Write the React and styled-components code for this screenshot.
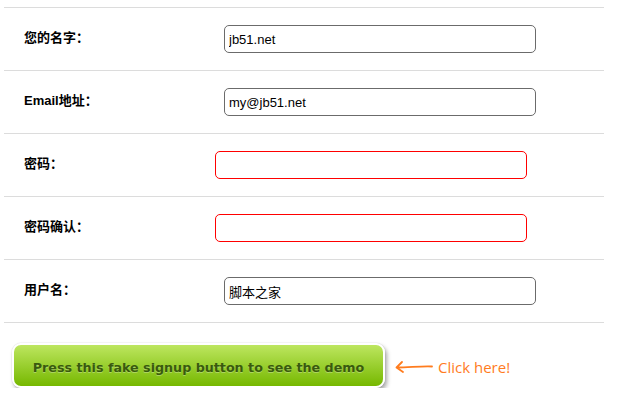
import React from 'react';
import styled, { createGlobalStyle } from 'styled-components';

const GlobalStyle = createGlobalStyle`
    body {
        margin: 0;
        background: #fff;
        font-family: "Liberation Sans", Arial, "Noto Sans CJK SC", sans-serif;
        color: #000;
    }
`;

const Page = styled.div`
    padding: 7px 0 0 4px;
    width: 600px;
`;

const FormList = styled.ul`
    list-style: none;
    margin: 0;
    padding: 0;
    border-top: 1px solid #dcdcdc;
`;

const Row = styled.li`
    display: flex;
    align-items: center;
    height: 62px;
    border-bottom: 1px solid #dcdcdc;
`;

const Label = styled.label`
    width: 220px;
    padding-left: 20px;
    padding-bottom: 5px;
    box-sizing: border-box;
    font-size: 13px;
    font-weight: bold;
    font-family: "Liberation Sans", Arial, "Noto Sans CJK SC", sans-serif;
`;

const Input = styled.input`
    box-sizing: border-box;
    width: 312px;
    height: 28px;
    margin-left: ${(p) => (p.$invalid ? '-9px' : '0')};
    padding: 0 4px;
    border: 1px solid ${(p) => (p.$invalid ? '#ff0000' : '#6b6b6b')};
    border-radius: 5px;
    font-size: 13px;
    font-family: "Liberation Sans", Arial, "Noto Sans CJK SC", sans-serif;
    color: #000;
    outline: none;
`;

const Actions = styled.div`
    display: flex;
    align-items: center;
    padding: 20px 0 0 8px;
`;

const SignupButton = styled.button`
    box-sizing: border-box;
    width: 373px;
    height: 45px;
    border: 2px solid #fff;
    border-radius: 9px;
    background: linear-gradient(#bde65f, #76b800);
    box-shadow: 2px 3px 4px rgba(0, 0, 0, 0.35), 0 0 1px rgba(0, 0, 0, 0.3);
    font-family: "DejaVu Sans", Verdana, sans-serif;
    font-size: 12.7px;
    font-weight: bold;
    color: #395a0e;
    text-shadow: 0 1px 0 rgba(255, 255, 255, 0.3);
    cursor: pointer;
    padding: 3px 0 0;
`;

const Hint = styled.span`
    display: flex;
    align-items: center;
    gap: 5px;
    margin-left: 10px;
    padding-top: 2px;
    color: #ff7c1e;
    font-family: "Open Sans", Lato, sans-serif;
    font-size: 15px;
`;

const fields = [
    { label: '您的名字：', value: 'jb51.net' },
    { label: 'Email地址：', value: 'my@jb51.net' },
    { label: '密码：', value: '', invalid: true, type: 'password' },
    { label: '密码确认：', value: '', invalid: true, type: 'password' },
    { label: '用户名：', value: '脚本之家' },
];

const App = () => {
    return (
        <Page>
            <GlobalStyle />
            <FormList>
                {fields.map((f) => (
                    <Row key={f.label}>
                        <Label>{f.label}</Label>
                        <Input
                            type={f.type || 'text'}
                            defaultValue={f.value}
                            $invalid={f.invalid}
                        />
                    </Row>
                ))}
            </FormList>
            <Actions>
                <SignupButton>Press this fake signup button to see the demo</SignupButton>
                <Hint>
                    <svg width="38" height="14" viewBox="0 0 38 14">
                        <path
                            d="M37 6.5 C26 6 14 7.5 2 7.5 M7 2 L1.5 7.5 L8 12"
                            fill="none"
                            stroke="#ff7c1e"
                            strokeWidth="1.8"
                            strokeLinecap="round"
                            strokeLinejoin="round"
                        />
                    </svg>
                    Click here!
                </Hint>
            </Actions>
        </Page>
    );
};

export default App;
